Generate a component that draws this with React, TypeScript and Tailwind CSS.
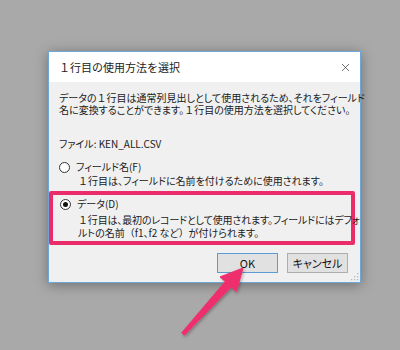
import { X } from 'lucide-react'

const jp = "font-['Noto_Sans_CJK_JP',sans-serif] [font-feature-settings:'palt']"

// full-width glyphs that keep their full width, as in the dialog font
function Wide({ c }: { c: string }) {
  return <span className="inline-block leading-[12px] [font-feature-settings:normal]">{c}</span>
}

function Radio({ checked }: { checked?: boolean }) {
  return (
    <span className="w-[11px] h-[11px] rounded-full border border-[#333] bg-white flex items-center justify-center shrink-0">
      {checked && <span className="w-[5px] h-[5px] rounded-full bg-[#111]" />}
    </span>
  )
}

export default function App() {
  return (
    <div className={`relative w-[400px] h-[350px] overflow-hidden bg-[#a9a9a9] ${jp}`}>
      <div className="pt-[51px] pl-[48px]">
        {/* Dialog */}
        <div className="w-[313px] h-[232px] border border-[#6ea6d8] bg-[#f0f0f0] shadow-[0_2px_12px_rgba(0,0,0,0.35)] flex flex-col relative">
          {/* Title bar */}
          <div className="h-[30px] bg-white flex items-center justify-between pl-[10px] pr-[8px]">
            <span className="text-[11px] text-[#222] [font-feature-settings:normal] whitespace-nowrap">１行目の使用方法を選択</span>
            <X className="w-[13px] h-[13px] text-[#333]" strokeWidth={1.3} />
          </div>

          {/* Body */}
          <div className="flex flex-col text-[10px] leading-[12px] text-[#1a1a1a] whitespace-nowrap">
            <div className="pt-[10px] pl-[10px]">
              <p>データの<Wide c="１" />行目は通常列見出しとして使用されるため、それをフィールド</p>
              <p>名に変換することができます。<Wide c="１" />行目の使用方法を選択してください。</p>
            </div>
            <p className="mt-[22px] pl-[10px]">ファイル: KEN_ALL.CSV</p>

            <div className="mt-[11px] pl-[10px]">
              <div className="flex items-center gap-[6px]">
                <Radio />
                <span>フィールド名(F)</span>
              </div>
              <p className="mt-[2px] pl-[19px]"><Wide c="１" />行目は、フィールドに名前を付けるために使用されます。</p>
            </div>

            {/* Highlight box */}
            <div className="mt-[4px] w-[306px] h-[54px] border-4 border-[#ea2c6b] rounded-[2px] pt-[3px] pl-[7px]">
              <div className="flex items-center gap-[6px]">
                <Radio checked />
                <span>データ(D)</span>
              </div>
              <div className="mt-[4px] pl-[18px]">
                <p className="tracking-[-0.15px]"><Wide c="１" />行目は、最初のレコードとして使用されます。フィールドにはデフォ</p>
                <p className="mt-[1px]">ルトの名前<Wide c="（" />f1、f2 など<Wide c="）" />が付けられます。</p>
              </div>
            </div>

            {/* Buttons */}
            <div className="mt-[8px] flex justify-end gap-[9px] pr-[12px]">
              <button className="w-[61px] h-[20px] bg-[#e1e1e1] border border-[#5c9bd6] text-[11px] text-[#111] flex items-center justify-center">
                OK
              </button>
              <button className="w-[61px] h-[20px] bg-[#e1e1e1] border border-[#adadad] text-[11px] text-[#111] flex items-center justify-center">
                キャンセル
              </button>
            </div>
          </div>

          {/* Size grip */}
          <svg className="absolute right-[1px] bottom-[1px]" width="10" height="10" viewBox="0 0 10 10">
            {[
              [8, 2], [8, 5], [5, 5], [8, 8], [5, 8], [2, 8],
            ].map(([x, y]) => (
              <rect key={`${x}-${y}`} x={x} y={y} width="1.3" height="1.3" fill="#b8b8b8" />
            ))}
          </svg>
        </div>
      </div>

      {/* Arrow annotation */}
      <svg className="absolute left-0 top-0 pointer-events-none" width="400" height="350" viewBox="0 0 400 350">
        <defs>
          <filter id="sh" x="-20%" y="-20%" width="140%" height="140%">
            <feDropShadow dx="1" dy="1.5" stdDeviation="1.5" floodColor="#000" floodOpacity="0.3" />
          </filter>
        </defs>
        <polygon
          points="243,268 236.4,291.7 231.2,287 184.3,335.2 181.7,332.8 225.2,281.6 220,276.9"
          fill="#ef2f6e"
          stroke="#ef2f6e"
          strokeWidth="1"
          strokeLinejoin="round"
          filter="url(#sh)"
        />
      </svg>
    </div>
  )
}
